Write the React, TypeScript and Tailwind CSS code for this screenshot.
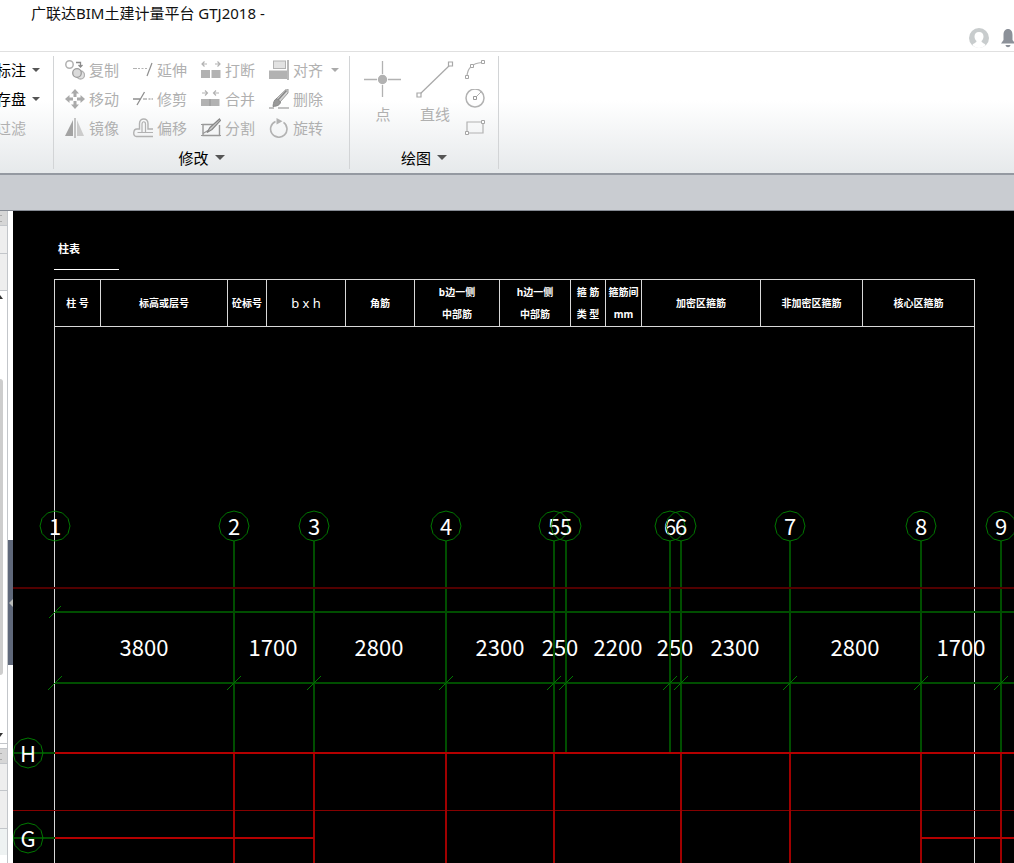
import React from 'react';

type IconProps = { children: React.ReactNode };

const Icon = ({ children }: IconProps) => (
  <svg width="20" height="20" viewBox="0 0 20 20" fill="none" stroke="#b2b2b2" className="shrink-0" aria-hidden="true">
    {children}
  </svg>
);

const Caret = ({ color = '#555555', width = 8 }: { color?: string; width?: number }) => (
  <svg width={width} height={width / 2} viewBox="0 0 8 4" className="shrink-0" aria-hidden="true">
    <path d="M0 0h8L4 4z" fill={color} />
  </svg>
);

const modifyTools = [
  {
    label: '复制',
    icon: (
      <Icon>
        <circle cx="4.5" cy="4.5" r="3.7" strokeWidth="1.5" />
        <path d="M11 2.5h4.5v4M13.5 5l2 2 2-2" stroke="#8a8a8a" strokeWidth="1.3" />
        <circle cx="15.5" cy="15" r="4" fill="#e2e2e2" strokeWidth="1.3" />
        <circle cx="12" cy="13" r="4.3" fill="#dadada" stroke="#9b9b9b" strokeWidth="1.3" />
      </Icon>
    ),
  },
  {
    label: '延伸',
    icon: (
      <Icon>
        <path d="M0 8.5h4" />
        <path d="M5 8.5h9" strokeDasharray="2 1.5" />
        <path d="M19 3l-5 13" stroke="#8f8f8f" strokeWidth="1.2" />
      </Icon>
    ),
  },
  {
    label: '打断',
    icon: (
      <Icon>
        <path d="M6 4H1.500M3.500 1.500L1 4l2.500 2.500M14 4h4.500M16.500 1.500L19 4l-2.500 2.500" strokeWidth="1.2" />
        <path d="M0 10h9v8H0zM10.500 10h9v8h-9z" fill="#b2b2b2" stroke="none" />
      </Icon>
    ),
  },
  {
    label: '对齐',
    arrow: true,
    icon: (
      <Icon>
        <rect x="4.500" y="1" width="12" height="7.500" fill="#e2e2e2" />
        <path d="M0 10.500h18v8.500H0z" fill="#b2b2b2" stroke="none" />
        <path d="M19 0v20" stroke="#a2a2a2" strokeWidth="1.5" />
      </Icon>
    ),
  },
  {
    label: '移动',
    icon: (
      <Icon>
        <path
          d="M10 0l4 4.500h-2.500V8h-3V4.500H6zM10 20l4-4.500h-2.500V12h-3v3.500H6zM0 10l4.500-4v2.500H8v3H4.500V14zM20 10l-4.500-4v2.500H12v3h3.500V14z"
          fill="#aaaaaa"
          stroke="none"
        />
      </Icon>
    ),
  },
  {
    label: '修剪',
    icon: (
      <Icon>
        <path d="M0 10h8M11.500 3L4 16" stroke="#8f8f8f" strokeWidth="1.3" />
        <path d="M10 10h10" strokeWidth="1.3" strokeDasharray="4 1.5 2 1" />
      </Icon>
    ),
  },
  {
    label: '合并',
    icon: (
      <Icon>
        <path d="M1 4h5M4 1.500L6.500 4 4 6.500M18 4h-5M15 1.500L12.500 4 15 6.500" strokeWidth="1.2" />
        <path d="M0 10h18.500v7H0z" fill="#b2b2b2" stroke="none" />
        <path d="M9 10v7" stroke="#929292" />
      </Icon>
    ),
  },
  {
    label: '删除',
    icon: (
      <Icon>
        <path d="M17.500 0h1.500v4l-8 9-4-3z" fill="#d5d5d5" stroke="#999999" />
        <path d="M17.500 1.500L9 11" stroke="#888888" strokeWidth="1.5" />
        <path d="M8 9.500l3.500 3.500c-.5 3-3 4-7.500 4.500.5-4 1-7 4-8z" fill="#999999" stroke="#888888" />
        <path d="M0 19h5M9 19h11" stroke="#888888" strokeWidth="1.2" />
      </Icon>
    ),
  },
  {
    label: '镜像',
    icon: (
      <Icon>
        <path d="M8 2v16H0z" fill="#a3a3a3" stroke="none" />
        <path d="M12 2v16h7z" fill="#cccccc" stroke="none" />
        <path d="M10 0v20" stroke="#a8a8a8" strokeWidth="1.3" />
      </Icon>
    ),
  },
  {
    label: '偏移',
    icon: (
      <Icon>
        <path d="M20 18.500H3.500C-.5 18.500 0 11 4 11h2.500V5.500C6.500-.5 15 -.5 15 5.500V11h5" strokeWidth="1.4" />
        <path d="M20 14.500H4.500M9 14V6c0-3 3.500-3 3.500 0v8" strokeWidth="1.2" />
      </Icon>
    ),
  },
  {
    label: '分割',
    icon: (
      <Icon>
        <path d="M12 6.500H2v11h16.500V7" stroke="#999999" strokeWidth="1.4" />
        <path d="M0 6.500h3M0 17.500h20M2 15.500l5-3" stroke="#999999" strokeWidth="1.2" />
        <path d="M18.500 1l1 1.500-8.500 9-5 3 3-5z" fill="#cccccc" stroke="#888888" strokeWidth="1.2" />
      </Icon>
    ),
  },
  {
    label: '旋转',
    icon: (
      <Icon>
        <path d="M6.500 3.500a8.200 8.200 0 1 0 8 .8" strokeWidth="1.6" />
        <path d="M7.500 0l6 3.200-6 3.300z" fill="#b2b2b2" stroke="none" />
      </Icon>
    ),
  },
];

const smallDrawTools = [
  {
    label: '弧',
    icon: (
      <Icon>
        <path d="M2 17C2 9 7 3 17 2.500" strokeWidth="1.2" />
        <path d="M.5 15.500h3v3h-3zM5.500 4.500h3v3h-3zM16.500.5h3v3h-3z" fill="#ffffff" stroke="#a5a5a5" />
      </Icon>
    ),
  },
  {
    label: '圆',
    icon: (
      <Icon>
        <circle cx="10" cy="9" r="9" strokeWidth="1.5" />
        <path d="M10 9l6-6" />
        <path d="M8.500 7.500h3v3h-3z" fill="#ffffff" stroke="#999999" />
      </Icon>
    ),
  },
  {
    label: '矩形',
    icon: (
      <Icon>
        <path d="M2 4h16v11H2z" strokeWidth="1.2" />
        <path d="M16.500 2.500h3v3h-3zM.5 13.500h3v3h-3z" fill="#ffffff" stroke="#a5a5a5" />
      </Icon>
    ),
  },
];

const columns = [
  { width: 'w-[46px]', lines: ['柱 号'] },
  { width: 'w-[127px]', lines: ['标高或层号'] },
  { width: 'w-[39px]', lines: ['砼标号'] },
  { width: 'w-[79px]', lines: ['b x h'], latin: true },
  { width: 'w-[69px]', lines: ['角筋'] },
  { width: 'w-[85px]', lines: ['b边一侧', '中部筋'] },
  { width: 'w-[71px]', lines: ['h边一侧', '中部筋'] },
  { width: 'w-[35px]', lines: ['箍 筋', '类 型'] },
  { width: 'w-[36px]', lines: ['箍筋间', 'mm'] },
  { width: 'w-[119px]', lines: ['加密区箍筋'] },
  { width: 'w-[102px]', lines: ['非加密区箍筋'] },
  { width: '', lines: ['核心区箍筋'] },
];

// Grid axes in drawing coordinates
const axes = [
  { x: 55, label: '1' },
  { x: 234, label: '2', beam: true },
  { x: 314, label: '3', beam: true },
  { x: 446, label: '4', beam: true },
  { x: 554, label: '5', beam: true },
  { x: 566, label: '5' },
  { x: 670, label: '6' },
  { x: 681, label: '6', beam: true },
  { x: 790, label: '7', beam: true },
  { x: 921, label: '8', beam: true },
  { x: 1001, label: '9', beam: true },
];

const rowAxes = [
  { y: 753, label: 'H' },
  { y: 838, label: 'G' },
];

const dimensions = [
  { x: 144, value: '3800' },
  { x: 273, value: '1700' },
  { x: 379, value: '2800' },
  { x: 500, value: '2300' },
  { x: 560, value: '250' },
  { x: 618, value: '2200' },
  { x: 675, value: '250' },
  { x: 735, value: '2300' },
  { x: 855, value: '2800' },
  { x: 961, value: '1700' },
];

const bubblePoints = (cx: number, cy: number) =>
  Array.from({ length: 12 }, (_, i) => {
    const angle = (i * Math.PI) / 6;
    return `${(cx + 15 * Math.sin(angle)).toFixed(1)},${(cy - 15 * Math.cos(angle)).toFixed(1)}`;
  }).join(' ');

const Bubble = ({ cx, cy, label }: { cx: number; cy: number; label: string }) => (
  <>
    <text x={cx} y={cy + 9} textAnchor="middle" fontSize="22" fill="#ffffff">
      {label}
    </text>
    <polygon points={bubblePoints(cx, cy)} fill="none" stroke="#007800" />
  </>
);

const GridDrawing = () => (
  <svg className="absolute inset-0 h-full w-full font-['Noto_Sans_CJK_SC',sans-serif]">
    <g transform="translate(-13 -211)">
      {dimensions.map((d) => (
        <text key={d.x} x={d.x} y="656" textAnchor="middle" fontSize="22" fill="#ffffff">
          {d.value}
        </text>
      ))}

      <g stroke="#004e00" strokeWidth="2">
        <line x1="55" y1="612" x2="200%" y2="612" />
        <line x1="55" y1="683" x2="200%" y2="683" />
        {axes.slice(1).map((a) => (
          <line key={a.x} x1={a.x} y1="541" x2={a.x} y2="753" />
        ))}
      </g>

      <path d="M49 618l12-12" stroke="#007800" />
      {axes.map((a) => (
        <path key={a.x} d={`M${a.x - 7} 690l14-14`} stroke="#007800" />
      ))}

      <g strokeWidth="2">
        <line x1="13" y1="588" x2="200%" y2="588" stroke="#520000" />
        <line x1="13" y1="810.5" x2="200%" y2="810.5" stroke="#850000" strokeWidth="1" />
        {axes
          .filter((a) => a.beam)
          .map((a) => (
            <line key={a.x} x1={a.x} y1="753" x2={a.x} y2="200%" stroke="#a00000" />
          ))}
        <line x1="55" y1="753" x2="200%" y2="753" stroke="#b40000" />
        <line x1="55" y1="838" x2="314" y2="838" stroke="#b40000" />
        <line x1="921" y1="838" x2="200%" y2="838" stroke="#b40000" />
      </g>

      {axes.map((a) => (
        <Bubble key={a.x} cx={a.x} cy={526} label={a.label} />
      ))}
      {rowAxes.map((r) => (
        <g key={r.label}>
          <line x1="13" y1={r.y} x2="55" y2={r.y} stroke="#004e00" strokeWidth="2" />
          <Bubble cx={28} cy={r.y} label={r.label} />
        </g>
      ))}
    </g>
  </svg>
);

const ColumnTable = () => (
  <>
    <h2 className="ml-[41px] mt-6 h-[35px] w-[65px] border-b border-white pl-1 text-[11px] font-bold leading-7">柱表</h2>
    <div className="ml-[41px] mt-[9px] w-[921px] flex-1 border-x border-t border-[#d8d8d8]">
      <table className="w-full table-fixed border-separate border-spacing-0">
        <thead>
          <tr>
            {columns.map((col, i) => (
              <th
                key={i}
                className={`${col.width} h-[47px] border-b border-r border-[#d8d8d8] p-0 last:border-r-0 ${
                  col.latin ? 'text-[13px] font-normal' : 'text-[10px] font-bold'
                }`}
              >
                {col.lines.map((line) => (
                  <span key={line} className="block whitespace-nowrap leading-[22px]">
                    {line}
                  </span>
                ))}
              </th>
            ))}
          </tr>
        </thead>
      </table>
    </div>
  </>
);

const TitleBar = () => (
  <header className="flex h-[51px] shrink-0 justify-between bg-white">
    <h1 className="pl-[31px] pt-[3px] text-[15px] leading-5 text-[#111111]">广联达BIM土建计量平台 GTJ2018 -</h1>
    <div className="flex items-end gap-3 overflow-hidden pb-[3px]">
      <button aria-label="用户">
        <svg width="20" height="20" viewBox="0 0 20 20" className="block">
          <circle cx="10" cy="10" r="10" fill="#c8cccd" />
          <path d="M10 4c-3 0-4.500 2-4.500 4.500 0 2 1 3.500 2 4.500 0 2-3 2-4 4 3 4 10 4 13 0-1-2-4-2-4-4 1-1 2-2.500 2-4.500C14.500 6 13 4 10 4z" fill="#ffffff" />
        </svg>
      </button>
      <button aria-label="通知" className="-mr-[1px]">
        <svg width="14" height="20" viewBox="0 0 14 20" className="block">
          <path d="M7 1C4 1 2.500 3.500 2.500 7v5L0 15.500h14L11.500 12V7C11.500 3.500 10 1 7 1zM4.500 17h5c-.5 3-4.500 3-5 0z" fill="#8c9199" />
        </svg>
      </button>
    </div>
  </header>
);

const Separator = () => <div className="my-1 w-px shrink-0 bg-[#d2d4d6]" />;

const Ribbon = () => (
  <nav className="flex h-[124px] shrink-0 border-b-2 border-t border-b-[#9499a1] border-t-[#e0e0e0] bg-linear-to-b from-white from-40% to-[#e6e9eb] text-[15px] leading-5">
    <div className="w-[53px] shrink-0 overflow-hidden pt-[3px] text-black">
      <button className="-ml-1 flex h-[29px] items-center gap-[6px] whitespace-nowrap">
        标注
        <Caret />
      </button>
      <button className="-ml-1 flex h-[29px] items-center gap-[6px] whitespace-nowrap">
        存盘
        <Caret />
      </button>
      <button className="-ml-1 flex h-[29px] items-center whitespace-nowrap text-[#b0b0b0]">过滤</button>
    </div>
    <Separator />

    <div className="flex w-[295px] shrink-0 flex-col pt-[3px]">
      <div className="grid grid-cols-[repeat(4,68px)] pl-[11px]">
        {modifyTools.map((tool) => (
          <button key={tool.label} className="flex h-[29px] items-center gap-1 whitespace-nowrap text-[#b0b0b0]">
            {tool.icon}
            {tool.label}
            {tool.arrow && (
              <span className="pl-1">
                <Caret color="#aaaaaa" />
              </span>
            )}
          </button>
        ))}
      </div>
      <button className="flex h-8 items-center justify-center gap-[6px] text-black">
        修改
        <Caret width={10} />
      </button>
    </div>
    <Separator />

    <div className="flex w-[148px] shrink-0 flex-col pt-[3px]">
      <div className="flex h-[87px] pl-[14px] text-[#b0b0b0]">
        <button className="flex w-[38px] flex-col items-center gap-[6px] pt-[5px]">
          <svg width="38" height="38" viewBox="0 0 38 38" stroke="#b2b2b2" strokeWidth="1.3" aria-hidden="true">
            <path d="M0 19.500h13M24 19.500h13M18.500 1v13M18.500 25v12" />
            <circle cx="18.500" cy="19.500" r="4" fill="#b2b2b2" />
          </svg>
          点
        </button>
        <button className="ml-[14px] flex w-[38px] flex-col items-center gap-[6px] pt-[5px]">
          <svg width="38" height="38" viewBox="0 0 38 38" stroke="#a8a8a8" strokeWidth="1.2" aria-hidden="true">
            <path d="M3 35L35 4" />
            <path d="M1 33h4v4H1zM32.500 2h4v4h-4z" fill="#ffffff" />
          </svg>
          直线
        </button>
        <div className="ml-[11px] flex flex-col">
          {smallDrawTools.map((tool) => (
            <button key={tool.label} aria-label={tool.label} className="flex h-[29px] items-center">
              {tool.icon}
            </button>
          ))}
        </div>
      </div>
      <button className="flex h-8 items-center justify-center gap-[6px] text-black">
        绘图
        <Caret width={10} />
      </button>
    </div>
    <Separator />
  </nav>
);

const SidePanel = () => (
  <aside className="flex w-2 shrink-0 flex-col overflow-hidden border-r border-[#c3c6ca] bg-white">
    <div className="h-[15px] shrink-0 border-b border-[#c3c6ca] bg-[#d6d6d6]">
      <div className="mt-1 h-[7px] w-[2px] border-y border-[#aaaaaa]" />
    </div>
    <div className="h-7 shrink-0 border-b border-[#c3c6ca] bg-[#eeeeee]" />
    <div className="h-[37px] shrink-0 border-b border-[#c3c6ca] bg-[#eeeeee]" />
    <div className="flex flex-1 flex-col pb-[6px] pt-1">
      <svg width="3" height="4" viewBox="0 0 3 4" aria-hidden="true">
        <path d="M0 0l3 4H0z" fill="#333333" />
      </svg>
      <div className="mb-[58px] mt-20 w-[3px] flex-1 rounded-r-full bg-[#cdcdcd]" />
      <svg width="3" height="4" viewBox="0 0 3 4" aria-hidden="true">
        <path d="M0 4l3-4H0z" fill="#333333" />
      </svg>
    </div>
    <div className="h-[6px] shrink-0 border-y border-[#c3c6ca] bg-white" />
    <div className="h-[15px] shrink-0 border-b border-[#c3c6ca] bg-[#d6d6d6]">
      <div className="mt-1 h-[7px] w-[2px] border-y border-[#aaaaaa]" />
    </div>
    <div className="h-[27px] shrink-0 border-b border-[#c3c6ca] bg-[#eeeeee]" />
    <div className="h-[38px] shrink-0 border-b border-[#c3c6ca] bg-[#eeeeee]" />
    <div className="h-[26px] shrink-0 bg-[#eef2f2]" />
    <div className="h-2 shrink-0 bg-white" />
  </aside>
);

const App: React.FC = () => {
  return (
    <div className="flex min-h-screen flex-col overflow-hidden bg-white font-['Noto_Sans','Noto_Sans_CJK_SC',sans-serif]">
      <TitleBar />
      <Ribbon />
      <div className="h-9 shrink-0 border-b border-[#858a93] bg-[#c9ccd1]" />
      <div className="flex flex-1">
        <SidePanel />
        <div className="flex w-[5px] shrink-0 flex-col bg-white">
          <div className="h-[329px]" />
          <button aria-label="收起面板" className="flex h-[125px] items-center justify-end bg-[#5f687a]">
            <svg width="4" height="8" viewBox="0 0 4 8" aria-hidden="true">
              <path d="M4 0v8L0 4z" fill="#b9bcb9" />
            </svg>
          </button>
        </div>
        <main className="relative flex min-w-0 flex-1 flex-col overflow-hidden bg-black text-white">
          <ColumnTable />
          <GridDrawing />
        </main>
      </div>
    </div>
  );
};

export default App;
